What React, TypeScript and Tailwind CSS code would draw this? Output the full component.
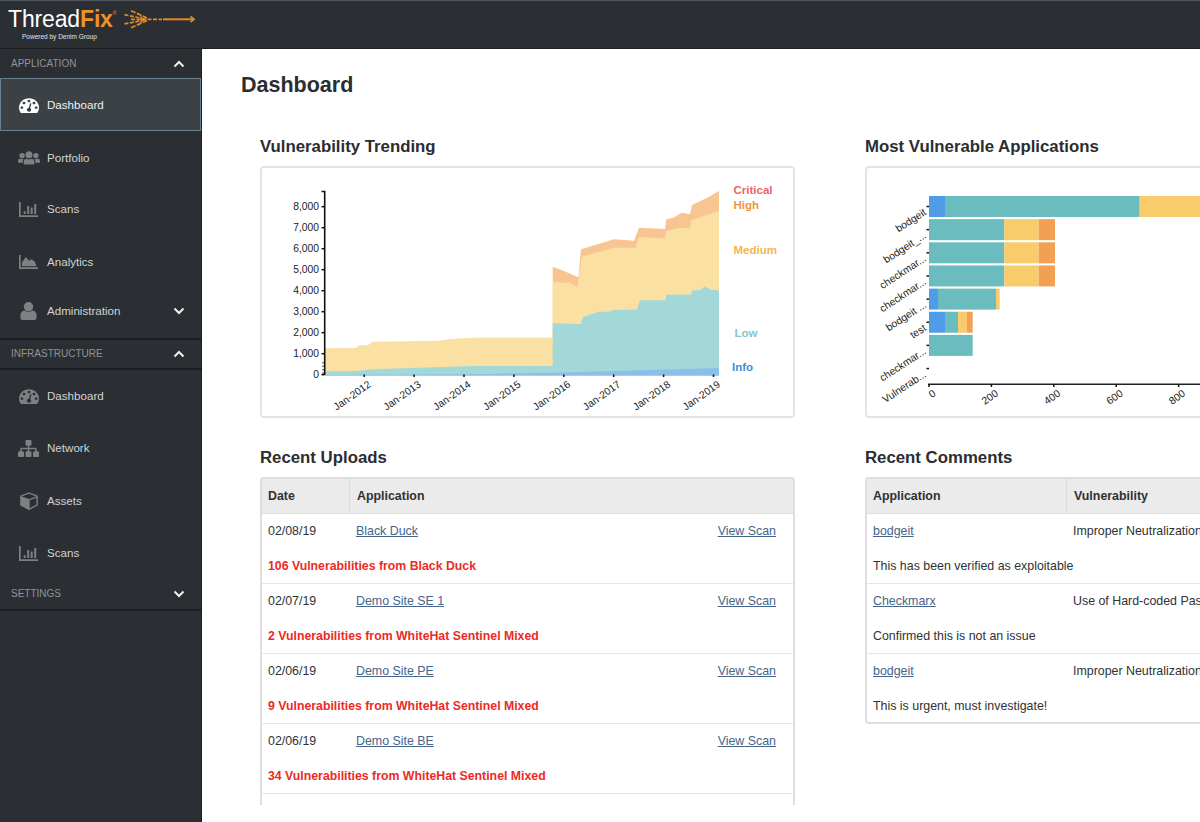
import { ReactNode } from 'react';

type IconName = 'gauge' | 'group' | 'bars' | 'area' | 'user' | 'sitemap' | 'cube';

interface NavItem {
  label: string;
  icon: IconName;
  height: string;
  active?: boolean;
  expandable?: boolean;
}

const applicationItems: NavItem[] = [
  { label: 'Dashboard', icon: 'gauge', height: 'h-[53px]', active: true },
  { label: 'Portfolio', icon: 'group', height: 'h-[54px]' },
  { label: 'Scans', icon: 'bars', height: 'h-[48px]' },
  { label: 'Analytics', icon: 'area', height: 'h-[57px]' },
  { label: 'Administration', icon: 'user', height: 'h-[42px]', expandable: true },
];

const infrastructureItems: NavItem[] = [
  { label: 'Dashboard', icon: 'gauge', height: 'h-[52px]' },
  { label: 'Network', icon: 'sitemap', height: 'h-[52px]' },
  { label: 'Assets', icon: 'cube', height: 'h-[53px]' },
  { label: 'Scans', icon: 'bars', height: 'h-[52px]' },
];

const uploads = [
  { date: '02/08/19', app: 'Black Duck', note: '106 Vulnerabilities from Black Duck' },
  { date: '02/07/19', app: 'Demo Site SE 1', note: '2 Vulnerabilities from WhiteHat Sentinel Mixed' },
  { date: '02/06/19', app: 'Demo Site PE', note: '9 Vulnerabilities from WhiteHat Sentinel Mixed' },
  { date: '02/06/19', app: 'Demo Site BE', note: '34 Vulnerabilities from WhiteHat Sentinel Mixed' },
];

const comments = [
  { app: 'bodgeit', vulnerability: 'Improper Neutralization', note: 'This has been verified as exploitable' },
  { app: 'Checkmarx', vulnerability: 'Use of Hard-coded Pas', note: 'Confirmed this is not an issue' },
  { app: 'bodgeit', vulnerability: 'Improper Neutralization', note: 'This is urgent, must investigate!' },
];

function NavIcon({ name }: { name: IconName }) {
  switch (name) {
    case 'gauge':
      return (
        <svg viewBox="0 128 1792 1536" className="h-4 w-5 shrink-0" fill="currentColor" preserveAspectRatio="none">
          <path d="M384 1152q0-53-37.5-90.5t-90.5-37.5-90.5 37.5-37.5 90.5 37.5 90.5 90.5 37.5 90.5-37.5 37.5-90.5zm192-448q0-53-37.5-90.5t-90.5-37.5-90.5 37.5-37.5 90.5 37.5 90.5 90.5 37.5 90.5-37.5 37.5-90.5zm428 481l101-382q6-26-7.5-48.5t-38.5-29.5-48 6.5-30 39.5l-101 382q-60 5-107 43.5t-63 98.5q-20 77 20 146t117 89 146-20 89-117q16-60-6-117t-72-91zm660-33q0-53-37.5-90.5t-90.5-37.5-90.5 37.5-37.5 90.5 37.5 90.5 90.5 37.5 90.5-37.5 37.5-90.5zm-640-640q0-53-37.5-90.5t-90.5-37.5-90.5 37.5-37.5 90.5 37.5 90.5 90.5 37.5 90.5-37.5 37.5-90.5zm448 192q0-53-37.5-90.5t-90.5-37.5-90.5 37.5-37.5 90.5 37.5 90.5 90.5 37.5 90.5-37.5 37.5-90.5zm320 448q0 261-141 483-19 29-54 29h-1402q-35 0-54-29-141-221-141-483 0-182 71-348t191-286 286-191 348-71 348 71 286 191 191 286 71 348z" />
        </svg>
      );
    case 'group':
      return (
        <svg viewBox="0 0 22 14" className="h-3.5 w-[22px] shrink-0" fill="currentColor">
          <circle cx="11" cy="3.7" r="3.5" />
          <circle cx="4.1" cy="4.6" r="2.7" />
          <circle cx="17.9" cy="4.6" r="2.7" />
          <path d="M5.6 11.5q0-3.8 3-3.8 1 .7 2.4.7t2.4-.7q3 0 3 3.8v.8q0 1.2-1.2 1.2H6.8q-1.2 0-1.2-1.2z" />
          <path d="M0 10.2q0-2.6 2-2.6 1 .5 2 .5.8 0 1.600-.4-.9 1.2-1 4H.8q-.8 0-.8-.8zM22 10.2q0-2.6-2-2.6-1 .5-2 .5-.8 0-1.600-.4.9 1.2 1 4h3.800q.8 0 .8-.8z" />
        </svg>
      );
    case 'bars':
      return (
        <svg viewBox="0 0 19 15" className="h-[15px] w-[19px] shrink-0" fill="currentColor">
          <path d="M0 0h1.700v13.200H19V15H0zM4.700 9.300h2V12h-2zM8.200 4h2v8h-2zM11.700 5.500h2V12h-2zM15.200 2h2v10h-2z" />
        </svg>
      );
    case 'area':
      return (
        <svg viewBox="0 0 19 14" className="h-[14px] w-[19px] shrink-0" fill="currentColor">
          <path d="M0 0h1.700v12.300H19V14H0zM3 11.300V7.500L6.700 2l3.600 3.700 2.200-1.500 3.200 2.300 2 4.800z" />
        </svg>
      );
    case 'user':
      return (
        <svg viewBox="0 0 17 18" className="h-[18px] w-[17px] shrink-0" fill="currentColor">
          <circle cx="8.5" cy="4.700" r="4.700" />
          <path d="M.3 14.400q0-5.400 4.300-5.800 1.600 1.300 3.900 1.300t3.900-1.300q4.300.4 4.300 5.800v.9q0 2.700-2.500 2.700H2.800Q.3 18 .3 15.300z" />
        </svg>
      );
    case 'sitemap':
      return (
        <svg viewBox="0 128 1792 1536" className="h-[17px] w-[21px] shrink-0" fill="currentColor" preserveAspectRatio="none">
          <path d="M1792 1248v320q0 40-28 68t-68 28h-320q-40 0-68-28t-28-68v-320q0-40 28-68t68-28h96v-192h-512v192h96q40 0 68 28t28 68v320q0 40-28 68t-68 28h-320q-40 0-68-28t-28-68v-320q0-40 28-68t68-28h96v-192h-512v192h96q40 0 68 28t28 68v320q0 40-28 68t-68 28h-320q-40 0-68-28t-28-68v-320q0-40 28-68t68-28h96v-192q0-52 38-90t90-38h512v-192h-96q-40 0-68-28t-28-68v-320q0-40 28-68t68-28h320q40 0 68 28t28 68v320q0 40-28 68t-68 28h-96v192h512q52 0 90 38t38 90v192h96q40 0 68 28t28 68z" />
        </svg>
      );
    case 'cube':
      return (
        <svg viewBox="0 0 1664 1792" className="h-[19px] w-[18px] shrink-0" fill="currentColor">
          <path d="M896 1629l640-349v-636l-640 233v752zm-64-865l698-254-698-254-698 254zm832-252v768q0 35-18 65t-49 47l-704 384q-28 16-61 16t-61-16l-704-384q-31-17-49-47t-18-65v-768q0-40 23-73t61-47l704-256q22-8 44-8t44 8l704 256q38 14 61 47t23 73z" />
        </svg>
      );
  }
}

function Chevron({ up = false }: { up?: boolean }) {
  return (
    <svg viewBox="0 0 12 8" className="h-2 w-3" fill="none" stroke="#f1f1f1" strokeWidth="2">
      <path d={up ? 'M1.5 6.5 6 2l4.5 4.5' : 'M1.5 1.5 6 6l4.5-4.5'} />
    </svg>
  );
}

function NavRow({ item }: { item: NavItem }) {
  return (
    <a
      className={`flex items-center pr-4 ${item.height} ${
        item.active
          ? 'border border-[#6c7f8f] bg-[#3c4145] pl-[17px] text-white'
          : 'pl-[18px] text-[#7e8083]'
      }`}
    >
      <span className="flex w-[21px] justify-center">
        <NavIcon name={item.icon} />
      </span>
      <span className={`ml-2 flex-1 text-[11.6px] ${item.active ? 'text-[#f0f0f0]' : 'text-[#d2d3d4]'}`}>
        {item.label}
      </span>
      {item.expandable && <Chevron />}
    </a>
  );
}

function SectionLabel({ label, up }: { label: string; up?: boolean }) {
  return (
    <div className="flex h-full items-center justify-between pr-4 pl-[11px] text-[10px] text-[#929496]">
      <span className="pb-px">{label}</span>
      <Chevron up={up} />
    </div>
  );
}

function Logo() {
  return (
    <div className="flex pl-2">
      <div className="w-[110px] shrink-0 pt-1.5">
        <div className="flex text-[23px] leading-6 tracking-[-0.15px] text-white">
          Thread<span className="font-bold text-[#ee9127]">Fix</span>
          <span className="text-[5px] leading-3 text-[#ee9127]">®</span>
        </div>
        <p className="pl-[14px] text-[6.5px] leading-[11px] whitespace-nowrap text-[#e4e4e4]">Powered by Denim Group</p>
      </div>
      <svg viewBox="124 8 72 22" className="mt-[7px] ml-[6px] h-[22px] w-[72px]" fill="none" stroke="#e08a2a" strokeWidth="1.7">
        <path d="M131 10.700 147 18M131 27.800 147 20.500" strokeDasharray="5 1.5" />
        <path d="M124.500 14.700 144 18.800M124.500 23.800 144 20.200" strokeDasharray="4 1.5" />
        <path d="M131 19.300H162" strokeDasharray="4 1.5" />
        <path d="M141 15.500v7.500M145 17v4.500" strokeWidth="1.2" />
        <path d="M163 19.300H193.500" strokeWidth="2" />
        <path d="M190.500 16.500l3.500 2.800-3.500 2.800" />
      </svg>
    </div>
  );
}

const yTicks = [0, 1000, 2000, 3000, 4000, 5000, 6000, 7000, 8000];
const years = [2012, 2013, 2014, 2015, 2016, 2017, 2018, 2019];

function TrendingChart() {
  return (
    <svg viewBox="262 168 531 248" className="h-[248px] w-[531px]" fontSize="10.3" fill="#222">
      <path
        fill="#f8c592"
        d="M552.7 266.7 563.3 270.7 578.3 277.3 581 249.3 614 239.3 634 240.7 639 227.7 665 229 666.3 219.3 673.3 217.7 681.7 212.7 690 214.3 692 205 708.3 197.3 713.3 194.3 719 191V375.500H552.7z"
      />
      <path
        fill="#fbe0a3"
        d="M325 348.3 356 348 359 345.5 368 345 373 341.7 440 340.7 450 339 473 337.7H552.7V282.3L570 282.7 577.3 287.3 581.5 256.7 614 247.7H635.7L638.5 237.3 665 238.3 666.3 230.7 680 227.7 690 228.3 691.7 220 719 210.7V375.500H325z"
      />
      <path
        fill="#a3d8d9"
        d="M325 371.3 356 371 373 369.3 473 366H552.7V323.3L581 324 583 317 598 312 611 311.5 613 310 637 309.5 640 300.3H665.5L666.5 294.7 691 294.5 692 290.5 700 290 705 286.3 710 289.5 719 290.5V375.500H325z"
      />
      <path fill="#8cbeea" d="M325 375 473 374.2 552 372.8 614 371 719 368V375.500H325z" />
      <path d="M321.5 191.500H324.7V375" fill="none" stroke="#111" strokeWidth="1.6" />
      <path d="M323 362v13" stroke="#111" strokeDasharray="1.5 2" />
      {yTicks.map((tick) => {
        const y = 374.7 - tick * 0.021;
        return (
          <g key={tick}>
            <path d={`M321.5 ${y}h3`} stroke="#111" strokeWidth="1.5" />
            <text x="319" y={y + 3.6} textAnchor="end">
              {tick.toLocaleString('en-US')}
            </text>
          </g>
        );
      })}
      {years.map((year, index) => {
        const x = 364.2 + index * 49.9;
        return (
          <g key={year}>
            <path d={`M${x} 374.500v2.500`} stroke="#111" strokeWidth="1.5" />
            <text transform={`translate(${x + 7.5} 386) rotate(-35)`} textAnchor="end">
              Jan-{year}
            </text>
          </g>
        );
      })}
      <g fontSize="11.5" fontWeight="bold">
        <text x="733.5" y="193.5" fill="#f0616b">Critical</text>
        <text x="733.5" y="209" fill="#ee9540">High</text>
        <text x="733.5" y="253.7" fill="#f3b54f">Medium</text>
        <text x="734.5" y="336.5" fill="#85c6c8">Low</text>
        <text x="732" y="370.5" fill="#3f8fe0">Info</text>
      </g>
    </svg>
  );
}

const blue = '#4f9de6';
const teal = '#6bbcbf';
const yellow = '#f8cc6b';
const orange = '#f2a154';

// each segment is [end x, colour], bars start at the y axis
const bars: { label: string; segments: [number, string][] }[] = [
  { label: 'bodgeit', segments: [[945, blue], [1139.7, teal], [1210, yellow]] },
  { label: 'bodgeit_...', segments: [[1004.3, teal], [1038.7, yellow], [1055, orange]] },
  { label: 'checkmar...', segments: [[1004.3, teal], [1038.7, yellow], [1055, orange]] },
  { label: 'checkmar...', segments: [[1004.3, teal], [1038.7, yellow], [1055, orange]] },
  { label: 'bodgeit ...', segments: [[938, blue], [996, teal], [999.7, yellow]] },
  { label: 'test', segments: [[945, blue], [958, teal], [967, yellow], [972.7, orange]] },
  { label: 'checkmar...', segments: [[972.7, teal]] },
  { label: 'Vulnerab...', segments: [] },
];

function ApplicationsChart() {
  return (
    <svg viewBox="867 168 333 248" className="h-[248px] w-[333px]" fontSize="10.4" fill="#222">
      {bars.map((bar, index) => {
        const top = 196 + index * 23.15;
        return (
          <g key={index}>
            {bar.segments.map(([end, colour], i) => {
              const start = i === 0 ? 929 : bar.segments[i - 1][0];
              return <rect key={end} x={start} y={top} width={end - start} height="21" fill={colour} />;
            })}
            <path d={`M926.5 ${top + 10.5}h2.500`} stroke="#111" strokeWidth="1.5" />
            <text transform={`translate(927 ${top + 18}) rotate(-33)`} textAnchor="end">
              {bar.label}
            </text>
          </g>
        );
      })}
      <path d="M928 384.300H1200" stroke="#222" strokeWidth="1.5" />
      {[0, 200, 400, 600, 800].map((value, index) => {
        const x = 929 + index * 62.4;
        return (
          <g key={value}>
            <path d={`M${x} 384v3`} stroke="#111" strokeWidth="1.5" />
            <text transform={`translate(${x + 7.5} 395) rotate(-35)`} textAnchor="end">
              {value}
            </text>
          </g>
        );
      })}
    </svg>
  );
}

function Heading({ children }: { children: ReactNode }) {
  return (
    <h2 className="h-[30px] pt-px text-[16.8px] leading-5 font-bold whitespace-nowrap text-[#2b2d30]">{children}</h2>
  );
}

function Link({ children }: { children: ReactNode }) {
  return <a className="text-[#45658a] underline underline-offset-1">{children}</a>;
}

export default function App() {
  return (
    <div className="h-[822px] w-[1200px] overflow-hidden bg-white font-['Liberation_Sans',Arial,sans-serif] text-[12.4px] text-[#2f3134]">
      <header className="h-[49px] border-t border-b border-t-[#4c555a] border-b-[#1c1f22] bg-[#2b2f33]">
        <Logo />
      </header>

      <div className="flex h-[773px]">
        <aside className="w-[202px] shrink-0 border-r border-[#1d2023] bg-[#2b2e33]">
          <div className="h-[29px]">
            <SectionLabel label="APPLICATION" up />
          </div>
          <nav className="h-[260px]">
            {applicationItems.map((item) => (
              <NavRow key={item.label} item={item} />
            ))}
          </nav>
          <div className="h-8 border-t-2 border-b-2 border-[#1b1e21]">
            <SectionLabel label="INFRASTRUCTURE" up />
          </div>
          <nav>
            {infrastructureItems.map((item) => (
              <NavRow key={item.label} item={item} />
            ))}
          </nav>
          <div className="h-8 border-b-2 border-[#1b1e21]">
            <SectionLabel label="SETTINGS" />
          </div>
        </aside>

        <main className="min-w-0 flex-1 overflow-hidden pt-[23px]">
          <h1 className="ml-[39px] h-16 pt-px text-[21.5px] leading-6 font-bold text-[#2b2d30]">Dashboard</h1>

          <div className="flex gap-[70px] pl-[58px]">
            <div className="w-[535px] shrink-0">
              <Heading>Vulnerability Trending</Heading>
              <div className="h-[252px] rounded border-2 border-[#e3e3e3]">
                <TrendingChart />
              </div>

              <div className="mt-[29px]">
                <Heading>Recent Uploads</Heading>
              </div>
              <div className="h-[328px] overflow-hidden rounded-t border-2 border-b-0 border-[#dedede]">
                <div className="flex h-[35px] border-b border-[#dedede] bg-[#ebebeb] font-bold">
                  <div className="flex w-[88px] items-center border-r border-[#dadada] pl-1.5">Date</div>
                  <div className="flex items-center pl-[7px]">Application</div>
                </div>
                {uploads.map((upload) => (
                  <div key={upload.note} className="h-[70px] border-b border-[#e6e6e6] pr-[17px] pl-1.5 leading-[35px]">
                    <div className="flex">
                      <span className="w-[88px]">{upload.date}</span>
                      <Link>{upload.app}</Link>
                      <span className="ml-auto">
                        <Link>View Scan</Link>
                      </span>
                    </div>
                    <p className="text-[12.3px] font-bold text-[#ee2a26]">{upload.note}</p>
                  </div>
                ))}
              </div>
            </div>

            <div className="w-[535px] shrink-0">
              <Heading>Most Vulnerable Applications</Heading>
              <div className="h-[252px] rounded border-2 border-[#e3e3e3]">
                <ApplicationsChart />
              </div>

              <div className="mt-[29px]">
                <Heading>Recent Comments</Heading>
              </div>
              <div className="overflow-hidden rounded border-2 border-[#dedede]">
                <div className="flex h-[35px] border-b border-[#dedede] bg-[#ebebeb] font-bold">
                  <div className="flex w-[200px] items-center border-r border-[#dadada] pl-1.5">Application</div>
                  <div className="flex items-center pl-[7px]">Vulnerability</div>
                </div>
                {comments.map((comment) => (
                  <div
                    key={comment.note}
                    className="h-[70px] border-b border-[#e6e6e6] pl-1.5 leading-[35px] last:h-[68px] last:border-b-0"
                  >
                    <div className="flex whitespace-nowrap">
                      <span className="w-[200px]">
                        <Link>{comment.app}</Link>
                      </span>
                      {comment.vulnerability}
                    </div>
                    <p>{comment.note}</p>
                  </div>
                ))}
              </div>
            </div>
          </div>
        </main>
      </div>
    </div>
  );
}
